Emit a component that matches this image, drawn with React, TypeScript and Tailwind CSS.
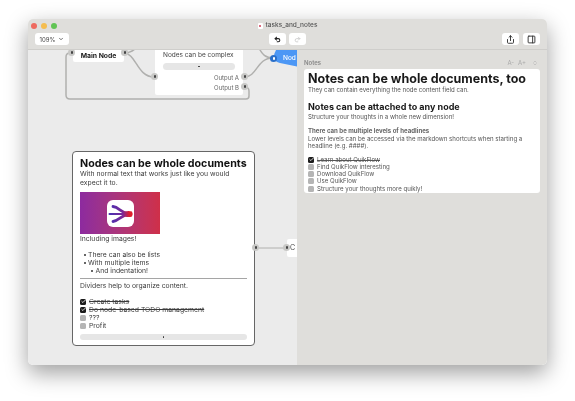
import { ChevronDown, Undo2, Redo2, Share, PanelRight, ChevronsUpDown, Check } from "lucide-react";

function Port({ className }: { className: string }) {
  return (
    <div className={`absolute flex h-[7px] w-[7px] items-center justify-center rounded-full bg-[#c8c8c6] ${className}`}>
      <div className="h-[3px] w-[2px] rounded-[1px] bg-[#444]" />
    </div>
  );
}

function Todo({ label, done }: { label: string; done?: boolean }) {
  return (
    <div className="flex h-[8px] items-center gap-[3px] leading-[8px]">
      {done ? (
        <div className="flex h-[6px] w-[6px] items-center justify-center rounded-[1.5px] bg-[#1c1c1c]">
          <Check className="h-[5px] w-[5px] text-white" strokeWidth={4} />
        </div>
      ) : (
        <div className="h-[6px] w-[6px] rounded-[1.5px] bg-[#b5b5b5]" />
      )}
      <span className={done ? "line-through" : ""}>{label}</span>
    </div>
  );
}

function Bullet({ label, className }: { label: string; className: string }) {
  return (
    <div className={`flex h-[8px] items-center gap-[2.5px] leading-[8px] ${className}`}>
      <div className="h-[2px] w-[2px] rounded-full bg-[#333]" />
      {label}
    </div>
  );
}

function ToolButton({ children }: { children: React.ReactNode }) {
  return <div className="flex h-[12px] w-[17px] items-center justify-center rounded-[3px] bg-white">{children}</div>;
}

export default function App() {
  return (
    <div className="h-[401px] w-[575px] overflow-hidden bg-white pl-[28px] pt-[19px] font-['Inter',sans-serif] text-[#2a2a2a]">
      <div className="flex h-[346px] w-[519px] flex-col overflow-hidden rounded-[5px] shadow-[0_8px_22px_rgba(0,0,0,0.38)] [will-change:transform]">
        {/* title bar and toolbar */}
        <div className="h-[31px] shrink-0 border-b border-[#cfcecb] bg-[#dfdedb]">
          <div className="relative flex h-[13px] items-center px-[3px] pt-[1px]">
            <div className="flex gap-[4px]">
              <div className="h-[6px] w-[6px] rounded-full bg-[#ee6a5f]" />
              <div className="h-[6px] w-[6px] rounded-full bg-[#f5bd4f]" />
              <div className="h-[6px] w-[6px] rounded-full bg-[#61c454]" />
            </div>
            <div className="flex flex-1 items-center justify-center gap-[3px] pr-[26px] text-[6.5px] font-medium text-[#555]">
              <div className="flex h-[6px] w-[5px] items-center justify-center rounded-[1px] bg-white">
                <div className="h-[2px] w-[2px] rounded-full bg-[#d23a55]" />
              </div>
              tasks_and_notes
            </div>
          </div>
          <div className="mt-[1px] flex h-[12px] items-center pl-[7px] pr-[7px]">
            <div className="flex h-[12px] w-[34px] items-center justify-center gap-[3px] rounded-[3px] bg-white text-[6px] text-[#444]">
              109%
              <ChevronDown className="h-[6px] w-[6px]" strokeWidth={3} />
            </div>
            <div className="ml-[200px] flex gap-[3px]">
              <ToolButton>
                <Undo2 className="h-[7px] w-[7px] text-[#222]" strokeWidth={3.5} />
              </ToolButton>
              <ToolButton>
                <Redo2 className="h-[7px] w-[7px] text-[#ccc]" strokeWidth={3} />
              </ToolButton>
            </div>
            <div className="ml-auto flex gap-[4px]">
              <ToolButton>
                <Share className="h-[9px] w-[9px] text-[#333]" strokeWidth={2.5} />
              </ToolButton>
              <ToolButton>
                <PanelRight className="h-[9px] w-[9px] text-[#333]" strokeWidth={2.5} />
              </ToolButton>
            </div>
          </div>
        </div>

        <div className="flex min-h-0 flex-1">
          {/* canvas */}
          <div className="relative w-[269px] shrink-0 overflow-hidden bg-[#ebebeb]">
            <svg className="absolute left-0 top-0" width="269" height="315" viewBox="28 50 269 315" fill="none" stroke="#b0b0ae" strokeWidth="1.5">
              <path d="M124 53 C136 53 137 77 154 77" />
              <path d="M124 53 C130 53 133 51 136 48" />
              <path d="M244 77 C258 77 256 58 273 58" />
              <path d="M258 46 C262 55 266 58 273 58" />
              <path d="M244 87 Q249 87 249 91 L249 96 Q249 99 246 99 L70 99 Q66 99 66 95 L66 57 Q66 53 70 53 L72 53" />
              <path d="M255 248 L287 248" strokeWidth="1" />
              <path d="M276 50 H297 V66.5 L280 63 Q275 62 274 58 Q274 53 276 50 Z" fill="#4c97f5" stroke="none" />
            </svg>

            <div className="absolute left-[45px] top-0 flex h-[12px] w-[51px] items-center justify-center rounded-b-[2px] bg-white text-[6.8px] font-bold text-[#1a1a1a]">
              Main Node
            </div>
            <Port className="left-[40px] top-[-1px]" />
            <Port className="left-[93px] top-[-1px]" />

            <div className="absolute left-[127px] top-0 h-[45px] w-[88px] rounded-b-[2px] bg-white pl-[8px] pr-[4px] pt-[1px] text-[6.5px] text-[#444]">
              <div className="leading-[9px]">Nodes can be complex</div>
              <div className="mr-[4px] mt-[3px] flex h-[7px] items-center justify-center rounded-full bg-[#e6e6e6]">
                <div className="h-[1.5px] w-[1.5px] rounded-full bg-[#333]" />
              </div>
              <div className="mt-[3px] text-right text-[6px] leading-[10px] text-[#666]">Output A</div>
              <div className="text-right text-[6px] leading-[10px] text-[#666]">Output B</div>
            </div>
            <Port className="left-[123px] top-[23px]" />
            <Port className="left-[213px] top-[23px]" />
            <Port className="left-[213px] top-[33px]" />

            <div className="absolute left-[255px] top-[4px] text-[6.5px] font-medium leading-[8px] text-white">Nod</div>
            <div className="absolute left-[242px] top-[4.5px] flex h-[7px] w-[7px] items-center justify-center rounded-full bg-[#2a6fc9]">
              <div className="h-[3px] w-[2px] rounded-[1px] bg-white" />
            </div>

            {/* document node */}
            <div className="absolute left-[44px] top-[101px] h-[195px] w-[183px] rounded-[4px] border-[1.5px] border-[#666] bg-white px-[7px] pt-[5px] text-[6.8px] leading-[8.5px] text-[#3c3c3c]">
              <div className="text-[10.7px] font-bold leading-[13px] text-[#111]">Nodes can be whole documents</div>
              <div>
                With normal text that works just like you would
                <br />
                expect it to.
              </div>
              <div className="mt-[5px] flex h-[42px] w-[80px] items-center justify-center bg-gradient-to-r from-[#8d2a9f] to-[#cf2f48]">
                <div className="h-[27px] w-[27px] rounded-[6px] bg-white">
                  <svg width="27" height="27" viewBox="0 0 27 27" fill="none" strokeLinecap="round">
                    <defs>
                      <linearGradient id="arrowFill" gradientUnits="userSpaceOnUse" x1="3" x2="26" y1="0" y2="0">
                        <stop offset="0" stopColor="#4a2fb0" />
                        <stop offset="0.55" stopColor="#7a2a98" />
                        <stop offset="0.85" stopColor="#e0202c" />
                      </linearGradient>
                    </defs>
                    <path d="M6 6.5 C12 7 14 13 22 14" stroke="url(#arrowFill)" strokeWidth="2.8" />
                    <path d="M6 21.5 C12 21 14 15 22 14" stroke="url(#arrowFill)" strokeWidth="2.8" />
                    <path d="M2.5 14 H20" stroke="url(#arrowFill)" strokeWidth="2" />
                    <path d="M14 14 C18 10.5 22 10.5 25 11.5 Q26.5 14 25 16.5 C22 17.5 18 17.5 14 14 Z" fill="url(#arrowFill)" />
                  </svg>
                </div>
              </div>
              <div className="mt-[1px]">Including images!</div>
              <div className="mt-[7px]">
                <Bullet label="There can also be lists" className="pl-[3.5px]" />
                <Bullet label="With multiple items" className="pl-[3.5px]" />
                <Bullet label="And indentation!" className="pl-[11px]" />
              </div>
              <div className="my-[3px] h-px bg-[#a5a5a5]" />
              <div>Dividers help to organize content.</div>
              <div className="mt-[7.75px]">
                <Todo label="Create tasks" done />
                <Todo label="Do node-based TODO management" done />
                <Todo label="???" />
                <Todo label="Profit" />
              </div>
              <div className="mt-[4px] flex h-[6px] items-center justify-center rounded-full bg-[#e6e6e6]">
                <div className="h-[1.5px] w-[1.5px] rounded-full bg-[#333]" />
              </div>
            </div>
            <Port className="left-[224px] top-[194px]" />

            <div className="absolute left-[259px] top-[189px] flex h-[18px] w-[10px] items-center rounded-l-[2px] bg-white pl-[3px] text-[7px] text-[#444]">
              C
            </div>
            <Port className="left-[255px] top-[194px]" />
          </div>

          {/* notes panel */}
          <div className="flex-1 bg-[#dfdedb] px-[7px] pt-[6px]">
            <div className="flex h-[13px] items-center justify-between text-[6px] font-semibold text-[#888]">
              <span>Notes</span>
              <div className="flex items-center gap-[4px] pr-[2px] font-normal text-[#aaa]">
                <span>A-</span>
                <span>A+</span>
                <ChevronsUpDown className="ml-[2px] h-[6px] w-[6px]" />
              </div>
            </div>
            <div className="h-[124px] rounded-[3px] bg-white px-[4px] pt-[3px] text-[6.1px] leading-[7.5px] text-[#555]">
              <div className="text-[12.5px] font-bold leading-[14px] text-[#1a1a1a]">Notes can be whole documents, too</div>
              <div>They can contain everything the node content field can.</div>
              <div className="mt-[7.5px] text-[9px] font-bold leading-[11px] text-[#1a1a1a]">Notes can be attached to any node</div>
              <div className="mt-[1px]">Structure your thoughts in a whole new dimension!</div>
              <div className="mt-[6.5px] font-bold text-[#666]">There can be multiple levels of headlines</div>
              <div>
                Lower levels can be accessed via the markdown shortcuts when starting a
                <br />
                headline (e.g. ####).
              </div>
              <div className="mt-[6px] space-y-[-0.75px]">
                <Todo label="Learn about QuikFlow" done />
                <Todo label="Find QuikFlow interesting" />
                <Todo label="Download QuikFlow" />
                <Todo label="Use QuikFlow" />
                <Todo label="Structure your thoughts more quikly!" />
              </div>
            </div>
          </div>
        </div>
      </div>
    </div>
  );
}
